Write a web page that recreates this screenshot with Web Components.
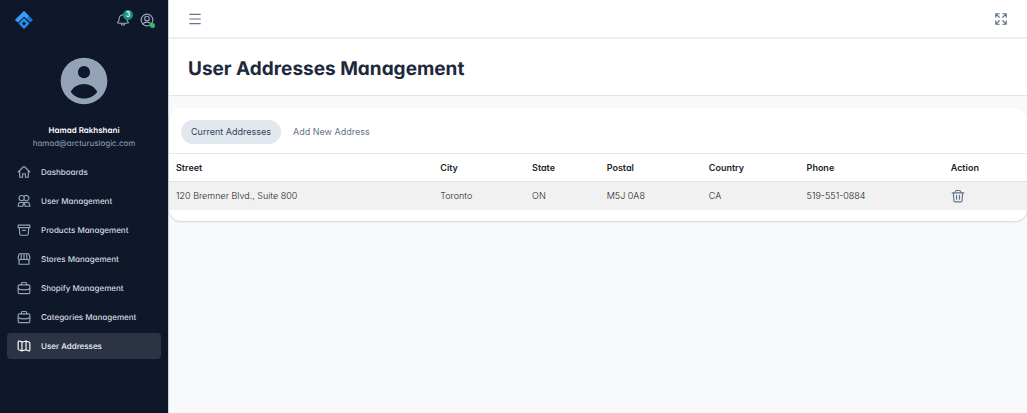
<!DOCTYPE html>
<html lang="en">
<head>
<meta charset="utf-8">
<title>User Addresses Management</title>
<style>
  body {
    margin: 0;
    min-height: 100vh;
    font-family: Inter, "Liberation Sans", sans-serif;
    font-feature-settings: "cv11";
    font-size: 9px;
    line-height: 12px;
    text-rendering: geometricPrecision;
    color: #1e293b;
    background: #f7f9fb;
  }
</style>
</head>
<body>
<app-shell>
  <side-bar slot="side">
    <user-card slot="user" name="Hamad Rakhshani" email="hamad@arcturuslogic.com"></user-card>
    <nav-item icon="home">Dashboards</nav-item>
    <nav-item icon="users">User Management</nav-item>
    <nav-item icon="archive">Products Management</nav-item>
    <nav-item icon="store">Stores Management</nav-item>
    <nav-item icon="case">Shopify Management</nav-item>
    <nav-item icon="case">Categories Management</nav-item>
    <nav-item icon="map" active>User Addresses</nav-item>
  </side-bar>
  <top-bar></top-bar>
  <page-header>User Addresses Management</page-header>
  <address-card></address-card>
</app-shell>

<script>
const ICONS = {
  home: '<path d="M2 12 11 3q1-1 2 0L22 12M4.500 10v11h5v-6h5v6h5V10"/>',
  users: '<circle cx="8" cy="7" r="4.500"/><path d="M13 3.500a4.500 4.500 0 1 1 0 7M5 14.500h14M4.500 14.500Q2 16 2 21h8q0-5 4-6.500M19.500 14.500Q22 16 22 21h-8q0-5-4-6.500"/>',
  archive: '<path d="M2 3.500h20V8H2zM4 8l.7 11q.1 2 2 2h10.600q1.900 0 2-2L20 8M9.500 12.500h5"/>',
  store: '<path d="M4 3h16L22 8.500v2a2.500 2.500 0 0 1-5 0 2.500 2.500 0 0 1-5 0 2.500 2.500 0 0 1-5 0 2.500 2.500 0 0 1-5 0v-2zM7.500 3l-.5 7.500M12 3v7.500M16.500 3l.5 7.500M3.500 13.500V21h17v-7.500"/>',
  case: '<rect x="2" y="6.500" width="20" height="15" rx="2"/><path d="M7.500 6.500V4.500A2 2 0 0 1 9.500 2.500h5a2 2 0 0 1 2 2v2M2 13.500q10 3.500 20 0M10.500 15h3"/>',
  map: '<path d="M8.500 19.500V5L4 3.500Q2 3 2 5v12q0 1 1 1.400l5.500 2 7-2L20 20.500q2 .5 2-1.500V7q0-1-1-1.400L15.500 3.500l-7 2M15.500 3.500v15"/>',
  menu: '<path d="M3 4h18M3 12h18M3 20h18"/>',
  expand: '<path d="M3 9V3h6M3 3l6 6M15 3h6v6M21 3l-6 6M3 15v6h6M3 21l6-6M21 15v6h-6M21 21l-6-6"/>',
  bell: '<path d="M5.700 17.500c-1.200 0-2.500-.3-3.200-.7C4.500 14.700 5.500 12.500 5.500 9.700a6.500 6.500 0 0 1 13 0c0 2.800 1 5 3 7.100-.7.400-2 .7-3.200.7zM9 18a3 3 0 0 0 6 0"/>',
  user: '<circle cx="12" cy="12" r="10"/><circle cx="12" cy="9.500" r="4"/><path d="M5 19q2-3.500 7-3.500t7 3.500"/>',
  trash: '<path d="M2 6.500h20M7.500 6.500V4.500A2 2 0 0 1 9.500 2.500h5a2 2 0 0 1 2 2v2M4 6.500l1 13.500q.1 2 2 2h10q1.900 0 2-2l1-13.500M9.500 11v6.500M14.500 11v6.500"/>'
};

class BaseElement extends HTMLElement {
  connectedCallback() {
    if (this.shadowRoot) return;
    this.attachShadow({ mode: 'open' }).innerHTML = this.render();
  }
}

customElements.define('ui-icon', class extends BaseElement {
  render() {
    return `<style>
      :host { display: block; flex: none; width: 14px; height: 14px; }
      svg { display: block; width: 100%; height: 100%; fill: none; stroke: currentColor;
            stroke-width: 2; stroke-linecap: round; stroke-linejoin: round; }
    </style><svg viewBox="0 0 24 24" aria-hidden="true">${ICONS[this.getAttribute('name')]}</svg>`;
  }
});

customElements.define('app-shell', class extends BaseElement {
  render() {
    return `<style>
      :host { display: grid; grid-template-columns: 168px minmax(0, 1fr); min-height: 100vh; }
      main { border-left: 1px solid #cbd2dc; }
    </style><slot name="side"></slot><main><slot></slot></main>`;
  }
});

customElements.define('side-bar', class extends BaseElement {
  render() {
    return `<style>
      :host { display: block; background: #0f172a; color: #94a3b8; font-size: 8px; }
      header { display: flex; align-items: center; gap: 10px; height: 40px; padding: 0 14px; }
      .logo { width: 20px; height: 20px; margin-right: auto; }
      button { position: relative; display: block; padding: 0; border: 0; background: none; color: inherit; font: inherit; }
      .count { position: absolute; top: -3px; left: 7px; width: 10px; height: 10px; border-radius: 5px;
               background: #0d9488; color: #fff; font-size: 7px; line-height: 10px; font-weight: 600; text-align: center; }
      .dot { position: absolute; right: -1px; bottom: -1px; width: 5px; height: 5px; border-radius: 50%; background: #22c55e; }
      nav { display: grid; gap: 3px; padding: 10px 7px 0; }
    </style>
    <header>
      <svg class="logo" viewBox="0 0 20 20" aria-hidden="true">
        <path d="M10 1 19 10l-3 2.500L10 6.500l-6 6L1 10z" fill="#1e78d6"/>
        <path d="M10 1 1 10l3 2.500L10 6.500l2.500 2L15 6z" fill="#3a9cf3"/>
        <path fill-rule="evenodd" d="M10 8l5.500 5.500L10 19l-5.500-5.500zM10 11.500l-2 2 2 2 2-2z" fill="#2b8eea"/>
      </svg>
      <button aria-label="Notifications"><ui-icon name="bell"></ui-icon><span class="count">3</span></button>
      <button aria-label="Account"><ui-icon name="user"></ui-icon><span class="dot"></span></button>
    </header>
    <slot name="user"></slot>
    <nav><slot></slot></nav>`;
  }
});

customElements.define('user-card', class extends BaseElement {
  render() {
    return `<style>
      :host { display: flex; flex-direction: column; align-items: center; gap: 1px; padding-top: 13px; }
      svg { width: 56px; height: 56px; margin-bottom: 14px; fill: #94a3b8; }
      strong { font-weight: 600; color: #fff; }
    </style>
    <svg viewBox="0 0 24 24" aria-hidden="true"><path fill-rule="evenodd" d="M12 2a10 10 0 1 0 0 20 10 10 0 0 0 0-20zm0 3.600a2.600 2.600 0 1 1 0 5.200 2.600 2.600 0 0 1 0-5.200zM12 19.500c-2.400 0-4.400-1-5.700-2.900C7.500 14.500 9.600 13.300 12 13.300s4.500 1.200 5.700 3.300c-1.300 1.900-3.300 2.900-5.700 2.900z"/></svg>
    <strong>${this.getAttribute('name')}</strong>
    <span>${this.getAttribute('email')}</span>`;
  }
});

customElements.define('nav-item', class extends BaseElement {
  render() {
    return `<style>
      :host { display: block; }
      a { display: flex; align-items: center; gap: 10px; height: 26px; padding: 0 10px; border-radius: 4px;
          color: #d3d9e2; font-weight: 500; text-decoration: none; }
      ui-icon { color: #94a3b8; }
      :host([active]) a { background: #2b3344; color: #f1f5f9; }
      :host([active]) ui-icon { color: #fff; }
    </style><a href="#"><ui-icon name="${this.getAttribute('icon')}"></ui-icon><slot></slot></a>`;
  }
});

customElements.define('top-bar', class extends BaseElement {
  render() {
    return `<style>
      :host { display: flex; align-items: center; justify-content: space-between; height: 37px;
              padding: 0 19px; background: #fff; border-bottom: 2px solid #eceef0; color: #64748b; }
      button { display: block; padding: 0; border: 0; background: none; color: inherit; }
    </style>
    <button aria-label="Toggle navigation"><ui-icon name="menu"></ui-icon></button>
    <button aria-label="Fullscreen"><ui-icon name="expand"></ui-icon></button>`;
  }
});

customElements.define('page-header', class extends BaseElement {
  render() {
    return `<style>
      :host { display: block; padding: 18px 19px 14px; background: #fff; border-bottom: 1px solid #e2e6ea; }
      h1 { margin: 0; font-size: 19px; line-height: 24px; font-weight: 700; }
    </style><h1><slot></slot></h1>`;
  }
});

customElements.define('address-card', class extends BaseElement {
  render() {
    return `<style>
      :host { display: block; margin-top: 12px; padding-bottom: 11px; border-radius: 12px; background: #fff;
              box-shadow: 0 1px 2px rgba(15, 23, 42, .16); text-rendering: auto; }
      .tabs { display: flex; gap: 2px; padding: 12px 12px 9px; }
      .tabs button { height: 24px; padding: 0 10px; border: 0; border-radius: 12px; background: none;
                     font: inherit; font-feature-settings: inherit; color: #64748b; }
      .tabs [aria-selected=true] { background: #e2e8f0; color: #334155; }
      table { width: 100%; border-collapse: collapse; table-layout: fixed; }
      th, td { height: 28px; padding: 0 7px; box-sizing: border-box; text-align: left; }
      th { border-top: 1px solid #e5e7eb; border-bottom: 1px solid #dfe1e4; font-weight: 600; color: #212529; }
      td { background: #f1f1f1; color: #212529; font-weight: 300; }
      td button { display: block; padding: 0; border: 0; background: none; color: #64748b; }
    </style>
    <div class="tabs" role="tablist">
      <button role="tab" aria-selected="true">Current Addresses</button>
      <button role="tab" aria-selected="false">Add New Address</button>
    </div>
    <table>
      <colgroup><col style="width:30.8%"><col style="width:10.7%"><col style="width:8.7%"><col style="width:11.9%"><col style="width:11.4%"><col style="width:16.8%"><col></colgroup>
      <thead><tr><th>Street</th><th>City</th><th>State</th><th>Postal</th><th>Country</th><th>Phone</th><th>Action</th></tr></thead>
      <tbody><tr><td>120 Bremner Blvd., Suite 800</td><td>Toronto</td><td>ON</td><td>M5J 0A8</td><td>CA</td><td>519-551-0884</td>
        <td><button aria-label="Delete address"><ui-icon name="trash"></ui-icon></button></td></tr></tbody>
    </table>`;
  }
});
</script>
</body>
</html>
